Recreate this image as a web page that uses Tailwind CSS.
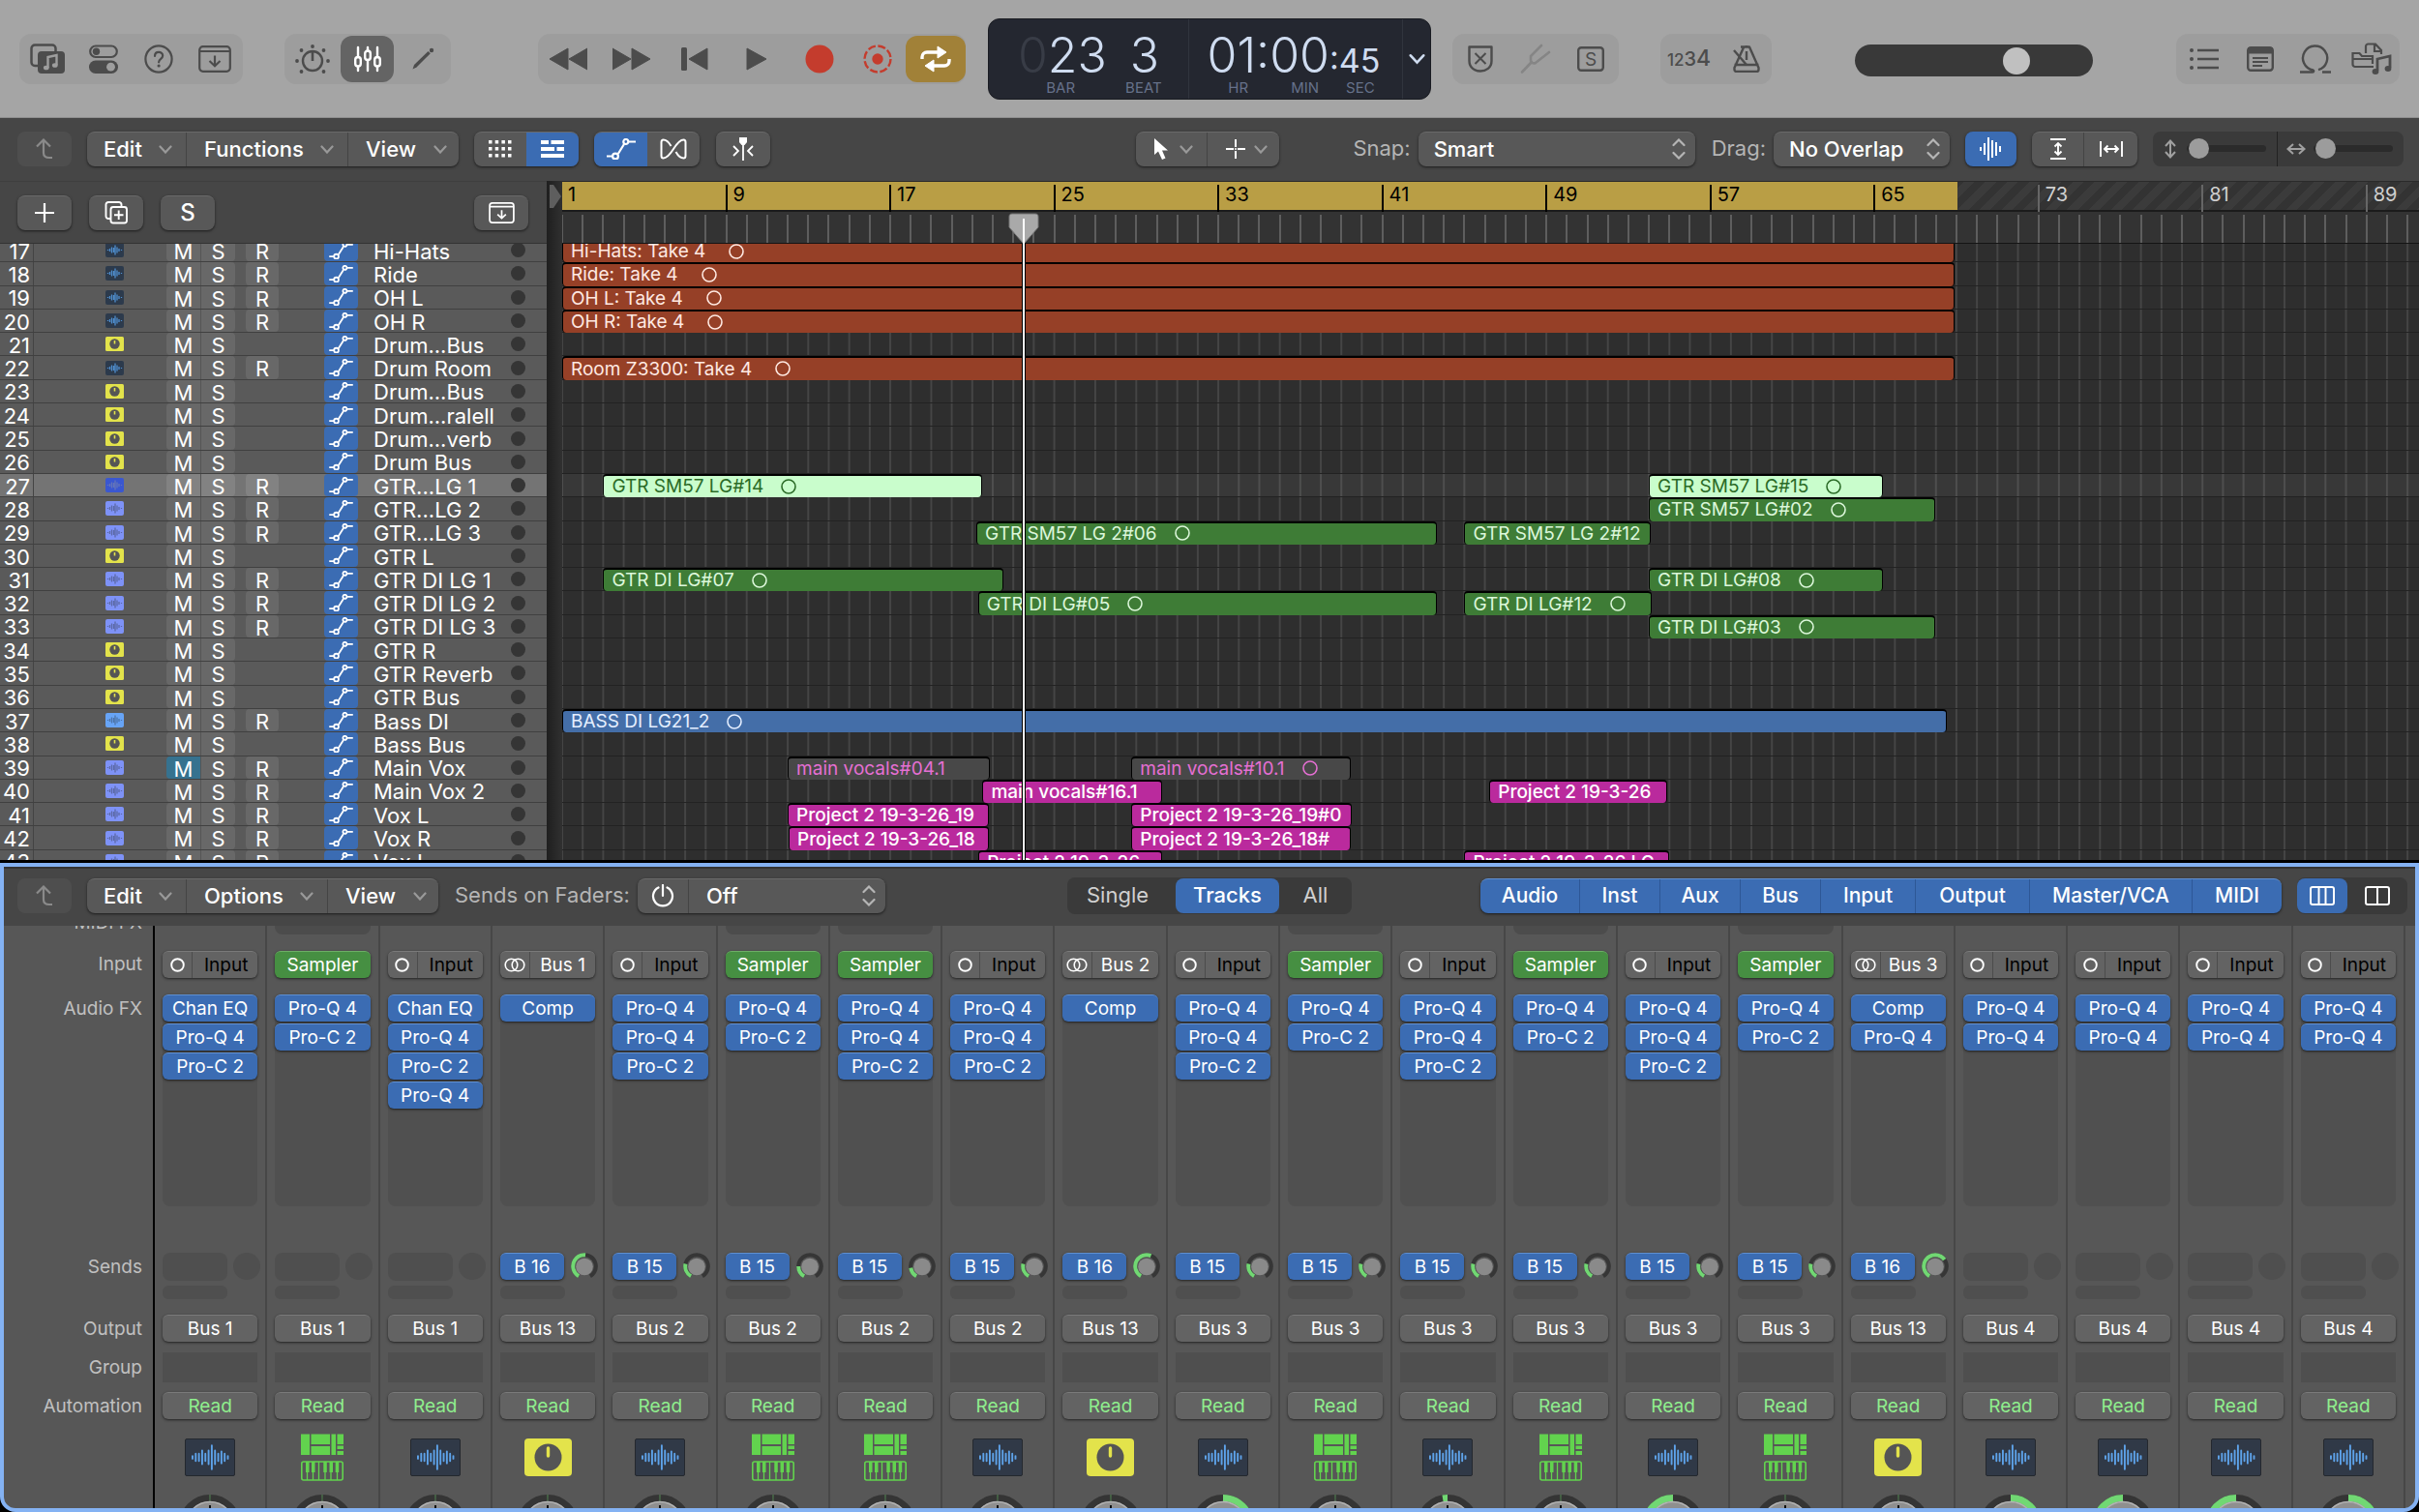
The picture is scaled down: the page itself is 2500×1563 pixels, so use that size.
<!DOCTYPE html>
<html lang="en">
<head>
  <meta charset="utf-8">
  <title>Project - Tracks</title>
  <meta name="viewport" content="width=device-width, initial-scale=1">
  <script src="https://cdn.jsdelivr.net/npm/@tailwindcss/browser@4"></script>
</head>
<body class="flex h-screen flex-col overflow-hidden bg-black font-['Inter','Liberation_Sans',sans-serif] text-[20px] text-white">

  <!-- icon sprite -->
  <svg class="hidden">
    <symbol id="i-library" viewBox="0 0 36 32"><path d="M8 23H5a3.500 3.500 0 0 1-3.500-3.500V5A3.500 3.500 0 0 1 5 1.500h18A3.500 3.500 0 0 1 26.500 5v3" fill="none" stroke="currentColor" stroke-width="2.500"/><rect x="8" y="8" width="28" height="23" rx="4" fill="currentColor"/><path d="M18.500 25V14l9-2v10" fill="none" stroke="#9e9e9e" stroke-width="2.400"/><ellipse cx="16.800" cy="25" rx="2.900" ry="2.300" fill="#9e9e9e"/><ellipse cx="25.800" cy="22.500" rx="2.900" ry="2.300" fill="#9e9e9e"/></symbol>
    <symbol id="i-toggles" viewBox="0 0 30 30"><rect x="1.200" y="1.500" width="27.600" height="11.500" rx="5.700" fill="none" stroke="currentColor" stroke-width="2.200"/><circle cx="7.500" cy="7.300" r="3.700" fill="currentColor"/><rect y="16.500" width="30" height="13.500" rx="6.700" fill="currentColor"/><circle cx="22.500" cy="23.200" r="4.400" fill="#9e9e9e"/></symbol>
    <symbol id="i-help" viewBox="0 0 30 30"><circle cx="15" cy="15" r="13.600" fill="none" stroke="currentColor" stroke-width="2.200"/><path d="M11 12c0-5.500 8.200-5.300 8.200-.4 0 3.200-4.100 3.300-4.100 6.700" fill="none" stroke="currentColor" stroke-width="2.200" stroke-linecap="round"/><circle cx="15.100" cy="22" r="1.600" fill="currentColor"/></symbol>
    <symbol id="i-inbox" viewBox="0 0 34 28"><rect x="1.200" y="1.200" width="31.600" height="25.600" rx="3.500" fill="none" stroke="currentColor" stroke-width="2.200"/><path d="M1 6h32M17 10.500V21m-5.500-5 5.500 5.200 5.500-5.200" fill="none" stroke="currentColor" stroke-width="2.200"/></symbol>
    <symbol id="i-dial" viewBox="0 0 36 30"><circle cx="18" cy="17" r="10" fill="none" stroke="currentColor" stroke-width="2.400"/><path d="M18 8v9" stroke="currentColor" stroke-width="2.600"/><g fill="currentColor"><circle cx="18" cy="2" r="1.900"/><circle cx="6.500" cy="6" r="1.900"/><circle cx="29.500" cy="6" r="1.900"/><circle cx="2" cy="17" r="1.900"/><circle cx="34" cy="17" r="1.900"/><circle cx="6.500" cy="28" r="1.900"/><circle cx="29.500" cy="28" r="1.900"/></g></symbol>
    <symbol id="i-faders" viewBox="0 0 28 28"><g fill="none" stroke="currentColor" stroke-width="2.400" stroke-linecap="round"><path d="M4 2v10M4 22v4M14 2v3M14 15v11M24 2v10M24 22v4"/><rect x="1.200" y="12" width="5.600" height="9.500" rx="2.800"/><rect x="11.200" y="5.500" width="5.600" height="9.500" rx="2.800"/><rect x="21.200" y="12" width="5.600" height="9.500" rx="2.800"/></g></symbol>
    <symbol id="i-pencil" viewBox="0 0 24 24"><path d="M1.500 22.500 3 18 17.500 4l2.300 2.200L5.500 20.500z" fill="currentColor"/><circle cx="21" cy="3" r="2.200" fill="currentColor"/></symbol>
    <symbol id="i-rewind" viewBox="0 0 40 24"><path d="M20 1v22L1 12zM40 1v22L21 12z" fill="currentColor" stroke="currentColor" stroke-linejoin="round"/></symbol>
    <symbol id="i-forward" viewBox="0 0 40 24"><path d="M0 1v22l19-11zM20 1v22l19-11z" fill="currentColor" stroke="currentColor" stroke-linejoin="round"/></symbol>
    <symbol id="i-start" viewBox="0 0 28 24"><rect width="6" height="24" rx="1.500" fill="currentColor"/><path d="M27 1v22L8 12z" fill="currentColor" stroke="currentColor" stroke-linejoin="round"/></symbol>
    <symbol id="i-play" viewBox="0 0 22 24"><path d="M1 1v22l20-11z" fill="currentColor" stroke="currentColor" stroke-linejoin="round"/></symbol>
    <symbol id="i-record" viewBox="0 0 30 30"><circle cx="15" cy="15" r="14.500" fill="#c43c2d"/></symbol>
    <symbol id="i-capture" viewBox="0 0 30 30"><circle cx="15" cy="15" r="13.500" fill="none" stroke="#c43c2d" stroke-width="2.400" stroke-dasharray="8 2.600"/><circle cx="15" cy="15" r="5.700" fill="#c43c2d"/></symbol>
    <symbol id="i-cycle" viewBox="0 0 32 28"><g fill="none" stroke="currentColor" stroke-width="3.400"><path d="M2 14v-2a5 5 0 0 1 5-5h14M30 14v2a5 5 0 0 1-5 5H11"/></g><path d="M18 1v12l9-6zM14 15v12l-9-6z" fill="currentColor" stroke="currentColor" stroke-linejoin="round"/></symbol>
    <symbol id="i-chev" viewBox="0 0 14 9"><path d="M1.500 1.500 7 7.500l5.500-6" fill="none" stroke="currentColor" stroke-width="2.200" stroke-linecap="round"/></symbol>
    <symbol id="i-updown" viewBox="0 0 14 22"><path d="M1.500 7 7 1.500 12.500 7M1.500 15 7 20.500 12.500 15" fill="none" stroke="currentColor" stroke-width="2.200" stroke-linecap="round"/></symbol>
    <symbol id="i-shield" viewBox="0 0 26 28"><path d="M1.500 1.500h23V16c0 14-23 14-23 0z" fill="none" stroke="currentColor" stroke-width="2.400" stroke-linejoin="round"/><path d="m7.500 8 11 11m0-11-11 11" stroke="currentColor" stroke-width="2"/></symbol>
    <symbol id="i-fork" viewBox="0 0 32 32"><path d="M22 2 11 13v5c0 2 3 3 5 2l14-11M12 19 2 29.500" fill="none" stroke="currentColor" stroke-width="2.600" stroke-linecap="round"/></symbol>
    <symbol id="i-solo" viewBox="0 0 28 26"><rect x="1.200" y="1.200" width="25.600" height="23.600" rx="3" fill="none" stroke="currentColor" stroke-width="2.400"/><text x="14" y="20" text-anchor="middle" font-size="19" fill="currentColor">S</text></symbol>
    <symbol id="i-metronome" viewBox="0 0 30 28"><path d="M9 1.500h6l3 0 9.500 21.500v2c0 1-1 2-2 2h-21c-1 0-2-1-2-2v-2L12 2c1-1 5-1 6 0M2.500 20h25" fill="none" stroke="currentColor" stroke-width="2.400" stroke-linejoin="round"/><path d="m2 5 13 15M15 6v9" stroke="currentColor" stroke-width="2.400"/></symbol>
    <symbol id="i-list" viewBox="0 0 30 22"><g fill="currentColor"><circle cx="2" cy="2" r="2"/><circle cx="2" cy="11" r="2"/><circle cx="2" cy="20" r="2"/></g><path d="M8 2h22M8 11h22M8 20h22" stroke="currentColor" stroke-width="2.400"/></symbol>
    <symbol id="i-note" viewBox="0 0 28 26"><rect x="1.200" y="1.200" width="25.600" height="23.600" rx="3" fill="none" stroke="currentColor" stroke-width="2.400"/><path d="M1 1h26v6.500H1z" fill="currentColor"/><path d="M6 12h16M6 16h16M6 20h10" stroke="currentColor" stroke-width="1.800"/></symbol>
    <symbol id="i-loop" viewBox="0 0 32 30"><path d="M0 28.500h13c1.500 0 1.500-1.500.5-2A12.600 12.600 0 1 1 19 26.200M23 28.500h9" fill="none" stroke="currentColor" stroke-width="2.400"/></symbol>
    <symbol id="i-media" viewBox="0 0 42 34"><path d="M15 11V4a2.500 2.500 0 0 1 2.500-2.500H25L31 8v4M24 2v7h7M23 25H4a2.500 2.500 0 0 1-2.500-2.500V11h7l2.500 3h11v8M2 17h21" fill="none" stroke="currentColor" stroke-width="2.200"/><path d="M27 29V17l13-3v12" fill="none" stroke="currentColor" stroke-width="2.800"/><ellipse cx="25" cy="30" rx="3.400" ry="3" fill="currentColor"/><ellipse cx="38" cy="27" rx="3.400" ry="3" fill="currentColor"/></symbol>
    <symbol id="i-up" viewBox="0 0 20 22"><path d="M2 8.500 9 1.500l7 7M9 2v13c0 3.500 2 5 6 5h3" fill="none" stroke="currentColor" stroke-width="2.200"/></symbol>
    <symbol id="i-grid" viewBox="0 0 24 18"><g fill="currentColor"><path id="gr" d="M0 0h3.500v3.500H0zM6.700 0h3.500v3.500H6.700zM13.400 0h3.500v3.500h-3.500zM20 0h3.500v3.500H20z"/><use href="#gr" y="7"/><use href="#gr" y="14"/></g></symbol>
    <symbol id="i-regions" viewBox="0 0 24 18"><path d="M0 0h8v4H0zM10.500 0H24v4H10.500zM0 7h14v4H0zM16.500 7H24v4h-7.500zM0 14h24v4H0z" fill="currentColor"/></symbol>
    <symbol id="i-auto" viewBox="0 0 30 22"><g fill="none" stroke="currentColor" stroke-width="2.200"><path d="M0 18.500h6M11.800 16 18 6M22.500 3.500H30"/><circle cx="9" cy="18.500" r="2.900"/><circle cx="19.800" cy="3.500" r="2.500"/></g></symbol>
    <symbol id="i-flex" viewBox="0 0 28 22"><path d="M11.500 8C9 3.500 6.500 1.500 3.500 1.500 2 1.500 1.500 2.500 1.500 4v14c0 1.500.5 2.500 2 2.500 4 0 7-4 10.500-9.500s6.500-9.500 10.500-9.500c1.500 0 2 1 2 2.500v14c0 1.500-.5 2.500-2 2.500-3 0-5.500-2-8-6.500" fill="none" stroke="currentColor" stroke-width="2"/></symbol>
    <symbol id="i-catch" viewBox="0 0 22 24"><path d="M7 0h8v5l-2.500 3h-3L7 5z" fill="currentColor"/><path d="M11 6v18M1 9l5 5-5 5M21 9l-5 5 5 5" fill="none" stroke="currentColor" stroke-width="1.800"/></symbol>
    <symbol id="i-arrow" viewBox="0 0 14 22"><path d="M0 0v17l4-3.500L8 22l3.500-1.500L8 12.500h6z" fill="currentColor"/></symbol>
    <symbol id="i-cross" viewBox="0 0 20 20"><path d="M10 0v8M10 12v8M0 10h8M12 10h8M10 9.200v1.600" stroke="currentColor" stroke-width="2"/></symbol>
    <symbol id="i-wavezoom" viewBox="0 0 24 24"><path d="M1 10v4M5 6v12M9 0v24M13 3v18M17 5v14M21 9v6" stroke="currentColor" stroke-width="2"/></symbol>
    <symbol id="i-vfit" viewBox="0 0 16 22"><path d="M0 1h16M0 21h16M8 5v12M4.500 8.500 8 5l3.500 3.500M4.500 13.500 8 17l3.500-3.500" fill="none" stroke="currentColor" stroke-width="1.900"/></symbol>
    <symbol id="i-hfit" viewBox="0 0 24 16"><path d="M1 0v16M23 0v16M5 8h14M8.500 4.500 5 8l3.500 3.500M15.500 4.500 19 8l-3.500 3.500" fill="none" stroke="currentColor" stroke-width="1.900"/></symbol>
    <symbol id="i-v" viewBox="0 0 14 20"><path d="M7 2v16M2 7l5-5.500L12 7M2 13l5 5.500 5-5.500" fill="none" stroke="currentColor" stroke-width="2"/></symbol>
    <symbol id="i-h" viewBox="0 0 20 14"><path d="M2 7h16M7 2 1.500 7 7 12M13 2l5.500 5-5.500 5" fill="none" stroke="currentColor" stroke-width="2"/></symbol>
    <symbol id="i-plus" viewBox="0 0 20 20"><path d="M10 0v20M0 10h20" stroke="currentColor" stroke-width="2.200"/></symbol>
    <symbol id="i-dup" viewBox="0 0 24 24"><path d="M7 18H4a2.500 2.500 0 0 1-2.500-2.500V3.500A2.500 2.500 0 0 1 4 1h11a2.500 2.500 0 0 1 2.500 2.500V6" fill="none" stroke="currentColor" stroke-width="1.900"/><rect x="6.500" y="6" width="16.500" height="16.500" rx="2.500" fill="none" stroke="currentColor" stroke-width="1.900"/><path d="M14.700 9.500v9.500M10 14.300h9.500" stroke="currentColor" stroke-width="1.900"/></symbol>
    <symbol id="i-power" viewBox="0 0 24 24"><path d="M12 1v11M7.500 3.500a10 10 0 1 0 9 0" fill="none" stroke="currentColor" stroke-width="2.200" stroke-linecap="round"/></symbol>
    <symbol id="i-cols3" viewBox="0 0 26 20"><path d="M9.500 1v18M16.500 1v18" stroke="currentColor" stroke-width="2"/><rect x="1" y="1" width="24" height="18" rx="2" fill="none" stroke="currentColor" stroke-width="2"/></symbol>
    <symbol id="i-cols2" viewBox="0 0 26 20"><path d="M13 1v18" stroke="currentColor" stroke-width="2"/><rect x="1" y="1" width="24" height="18" rx="2" fill="none" stroke="currentColor" stroke-width="2"/></symbol>
    <symbol id="i-wave" viewBox="0 0 52 39"><path d="M7 18v3M10.500 15.500v8M14 15.500v8M17.500 12v15M21 15.500v8M24.500 12v15M28 6.500v26M31.500 12v15M35 15.500v8M38.500 13v13M42 15.500v8M45.500 18v3" stroke="currentColor" stroke-width="2" stroke-linecap="round"/></symbol>
    <symbol id="i-aux" viewBox="0 0 49 39"><rect width="49" height="39" rx="4" fill="#e3e34b"/><circle cx="24.500" cy="19.500" r="14" fill="#555"/><path d="M24.500 10v8" stroke="#e3e34b" stroke-width="3.400" stroke-linecap="round"/></symbol>
    <symbol id="i-inst" viewBox="0 0 44 49"><path d="M0 .5h9v21.500H0zM10.500.5H30V11H10.500zM10.500 13H30v9H10.500zM31.500.5H36V22h-4.500zM37.500.5H44V11h-6.500zM37.500 12.500H44v3.500h-6.500zM37.500 18H44v4h-6.500z" fill="#62d34e"/><rect x=".8" y="29" width="42.400" height="19" rx="2" fill="none" stroke="#62d34e" stroke-width="1.600"/><path d="M6.500 29v19M12.500 29v19M18.500 29v19M25 29v19M31 29v19M37.500 29v19" stroke="#62d34e" stroke-width="1.300"/><path d="M5 29h3.500v11H5zM11 29h3.500v11H11zM23.300 29h3.500v11h-3.500zM29.500 29h3.500v11h-3.500zM35.700 29h3.500v11h-3.500z" fill="#62d34e"/></symbol>
  </svg>

  <!-- control bar -->
  <header class="flex h-[122px] shrink-0 items-center border-b border-[#8f8f8f] bg-[#a5a5a5] px-5 text-[#4c4c4c]">
    <div class="grid h-[52px] w-[231px] grid-cols-4 place-items-center rounded-xl bg-[#9d9d9d]">
      <button aria-label="Library"><svg class="h-8 w-9"><use href="#i-library"/></svg></button>
      <button aria-label="Inspector"><svg class="h-[30px] w-[30px]"><use href="#i-toggles"/></svg></button>
      <button aria-label="Quick Help"><svg class="h-[30px] w-[30px]"><use href="#i-help"/></svg></button>
      <button aria-label="Toolbar"><svg class="h-7 w-[34px]"><use href="#i-inbox"/></svg></button>
    </div>
    <div class="ml-[43px] grid h-[52px] w-[172px] grid-cols-3 place-items-center rounded-xl bg-[#9d9d9d]">
      <button aria-label="Smart Controls"><svg class="h-[30px] w-9"><use href="#i-dial"/></svg></button>
      <button aria-label="Mixer" class="grid h-12 w-[55px] place-items-center rounded-xl bg-[#646464] text-white"><svg class="h-7 w-7"><use href="#i-faders"/></svg></button>
      <button aria-label="Editors"><svg class="h-6 w-6"><use href="#i-pencil"/></svg></button>
    </div>
    <div class="ml-[90px] flex h-[52px] w-[442px] items-center rounded-xl bg-[#9d9d9d]">
      <div class="grid flex-1 grid-cols-[62px_70px_60px_68px_62px_58px] place-items-center">
        <button aria-label="Rewind"><svg class="h-6 w-10"><use href="#i-rewind"/></svg></button>
        <button aria-label="Forward"><svg class="h-6 w-10"><use href="#i-forward"/></svg></button>
        <button aria-label="Go to Beginning"><svg class="h-6 w-7"><use href="#i-start"/></svg></button>
        <button aria-label="Play"><svg class="h-6 w-[22px]"><use href="#i-play"/></svg></button>
        <button aria-label="Record"><svg class="h-[30px] w-[30px]"><use href="#i-record"/></svg></button>
        <button aria-label="Capture Recording"><svg class="h-[30px] w-[30px]"><use href="#i-capture"/></svg></button>
      </div>
      <button aria-label="Cycle" class="grid h-12 w-[62px] place-items-center rounded-xl bg-[#a18138] text-white"><svg class="h-7 w-8"><use href="#i-cycle"/></svg></button>
    </div>
    <div class="ml-[23px] flex h-[84px] w-[458px] rounded-xl border border-[#1a1c22] bg-[#242730] text-[#cfdcf0]">
      <div class="flex w-[207px] flex-col items-center border-r border-[#30343d]">
        <div class="flex h-[60px] gap-6 text-[50px] leading-[74px] font-light"><span><span class="text-[#383c46]">0</span>23</span><span>3</span></div>
        <div class="flex gap-[52px] pl-8 text-[15px] leading-[22px] text-[#66718a]"><span>BAR</span><span>BEAT</span></div>
      </div>
      <div class="flex flex-1 flex-col items-center border-r border-[#30343d] pr-1">
        <div class="flex h-[60px] items-baseline text-[50px] leading-[74px] font-light"><span>01:00</span><span class="text-[34px] font-normal">:45</span></div>
        <div class="flex gap-[44px] pl-4 text-[15px] leading-[22px] text-[#66718a]"><span>HR</span><span class="flex gap-7"><span>MIN</span><span>SEC</span></span></div>
      </div>
      <button aria-label="Display Mode" class="grid w-7 place-items-center"><svg class="h-3 w-[17px]"><use href="#i-chev"/></svg></button>
    </div>
    <div class="ml-[22px] grid h-[52px] w-[172px] grid-cols-3 place-items-center rounded-xl bg-[#9d9d9d]">
      <button aria-label="Replace"><svg class="h-7 w-[26px]"><use href="#i-shield"/></svg></button>
      <button aria-label="Tuner" class="text-[#858585]"><svg class="h-8 w-8"><use href="#i-fork"/></svg></button>
      <button aria-label="Solo"><svg class="h-[26px] w-7"><use href="#i-solo"/></svg></button>
    </div>
    <div class="ml-[43px] flex h-[52px] w-[115px] items-center justify-between rounded-xl bg-[#9d9d9d] px-[7px]">
      <button aria-label="Count In" class="flex items-baseline font-medium"><span class="text-[17px]">12</span><span class="text-[20px]">3</span><span class="text-[23px]">4</span></button>
      <button aria-label="Metronome" class="pr-1"><svg class="h-7 w-[30px]"><use href="#i-metronome"/></svg></button>
    </div>
    <input type="range" aria-label="Master Volume" min="0" max="100" value="70" class="mt-1 ml-auto h-[33px] w-[246px] appearance-none rounded-full bg-[#393939] [&::-webkit-slider-thumb]:h-[28px] [&::-webkit-slider-thumb]:w-[28px] [&::-webkit-slider-thumb]:appearance-none [&::-webkit-slider-thumb]:rounded-full [&::-webkit-slider-thumb]:bg-[#c0c0c0]">
    <div class="ml-[86px] grid h-[52px] w-[231px] grid-cols-4 place-items-center rounded-xl bg-[#9d9d9d]">
      <button aria-label="List Editors"><svg class="h-[22px] w-[30px]"><use href="#i-list"/></svg></button>
      <button aria-label="Note Pad"><svg class="h-[26px] w-7"><use href="#i-note"/></svg></button>
      <button aria-label="Loop Browser"><svg class="h-[30px] w-8"><use href="#i-loop"/></svg></button>
      <button aria-label="Browser"><svg class="h-[34px] w-[42px]"><use href="#i-media"/></svg></button>
    </div>
  </header>

  <!-- tracks area menu bar -->
  <nav class="flex h-[65px] shrink-0 items-center bg-[#464646] pr-4 pb-[2px] pl-[18px] text-[22px] font-medium">
    <button aria-label="Up" class="grid h-9 w-14 place-items-center rounded-lg bg-[#4e4e4e] text-[#8a8a8a]"><svg class="h-[22px] w-5"><use href="#i-up"/></svg></button>
    <div class="ml-4 flex h-9 divide-x divide-[#444] rounded-lg border-t border-[#6a6a6a] bg-[#585858] shadow-sm shadow-black/50">
      <button class="flex w-[103px] items-center justify-between pr-[14px] pl-[17px]">Edit<svg class="h-[9px] w-[14px] text-[#999]"><use href="#i-chev"/></svg></button>
      <button class="flex w-[167px] items-center justify-between pr-[14px] pl-[18px]">Functions<svg class="h-[9px] w-[14px] text-[#999]"><use href="#i-chev"/></svg></button>
      <button class="flex w-[114px] items-center justify-between pr-3 pl-[18px]">View<svg class="h-[9px] w-[14px] text-[#999]"><use href="#i-chev"/></svg></button>
    </div>
    <div class="ml-4 flex h-9 overflow-hidden rounded-lg border-t border-[#6a6a6a] bg-[#585858] shadow-sm shadow-black/50">
      <button aria-label="Live Loops" class="grid w-[54px] place-items-center"><svg class="h-[18px] w-6"><use href="#i-grid"/></svg></button>
      <button aria-label="Tracks View" class="grid w-[54px] place-items-center bg-[#3b6cb3]"><svg class="h-[18px] w-6"><use href="#i-regions"/></svg></button>
    </div>
    <div class="ml-4 flex h-9 overflow-hidden rounded-lg border-t border-[#6a6a6a] bg-[#585858] shadow-sm shadow-black/50">
      <button aria-label="Automation" class="grid w-[55px] place-items-center bg-[#3b6cb3]"><svg class="h-[22px] w-[30px]"><use href="#i-auto"/></svg></button>
      <button aria-label="Flex" class="grid w-[54px] place-items-center"><svg class="h-[22px] w-7"><use href="#i-flex"/></svg></button>
    </div>
    <button aria-label="Catch Playhead" class="ml-[17px] grid h-9 w-14 place-items-center rounded-lg border-t border-[#6a6a6a] bg-[#585858] shadow-sm shadow-black/50"><svg class="h-6 w-[22px]"><use href="#i-catch"/></svg></button>
    <div class="ml-auto flex h-9 divide-x divide-[#444] rounded-lg border-t border-[#6a6a6a] bg-[#585858] shadow-sm shadow-black/50">
      <button aria-label="Pointer Tool" class="flex w-[74px] items-center justify-between pr-[14px] pl-[19px]"><svg class="h-[22px] w-[14px]"><use href="#i-arrow"/></svg><svg class="h-[9px] w-[14px] text-[#999]"><use href="#i-chev"/></svg></button>
      <button aria-label="Marquee Tool" class="flex w-[74px] items-center justify-between pr-3 pl-[19px]"><svg class="h-5 w-5"><use href="#i-cross"/></svg><svg class="h-[9px] w-[14px] text-[#999]"><use href="#i-chev"/></svg></button>
    </div>
    <label for="snap" class="ml-[76px] font-normal text-[#b5b5b5]">Snap:</label>
    <div class="ml-2 grid h-9 w-[286px] items-center">
      <select id="snap" class="col-start-1 row-start-1 h-9 w-full appearance-none rounded-lg border-t border-[#6a6a6a] bg-[#585858] pl-4 shadow-sm shadow-black/50"><option>Smart</option><option>Bar</option><option>Beat</option></select>
      <svg class="pointer-events-none col-start-1 row-start-1 mr-[10px] h-[22px] w-[14px] justify-self-end text-[#b5b5b5]"><use href="#i-updown"/></svg>
    </div>
    <label for="drag" class="ml-[17px] font-normal text-[#b5b5b5]">Drag:</label>
    <div class="ml-2 grid h-9 w-[182px] items-center">
      <select id="drag" class="col-start-1 row-start-1 h-9 w-full appearance-none rounded-lg border-t border-[#6a6a6a] bg-[#585858] pl-4 shadow-sm shadow-black/50"><option>No Overlap</option><option>Overlap</option></select>
      <svg class="pointer-events-none col-start-1 row-start-1 mr-[10px] h-[22px] w-[14px] justify-self-end text-[#b5b5b5]"><use href="#i-updown"/></svg>
    </div>
    <button aria-label="Waveform Zoom" class="ml-4 grid h-9 w-[53px] place-items-center rounded-lg bg-[#3b6cb3] shadow-sm shadow-black/50"><svg class="h-6 w-6"><use href="#i-wavezoom"/></svg></button>
    <div class="ml-4 flex h-9 divide-x divide-[#444] rounded-lg border-t border-[#6a6a6a] bg-[#585858] shadow-sm shadow-black/50">
      <button aria-label="Vertical Auto Zoom" class="grid w-[54px] place-items-center"><svg class="h-[22px] w-4"><use href="#i-vfit"/></svg></button>
      <button aria-label="Zoom to Fit" class="grid w-[55px] place-items-center"><svg class="h-4 w-6"><use href="#i-hfit"/></svg></button>
    </div>
    <div class="ml-4 flex h-9 rounded-lg bg-[#3a3a3a] text-[#a0a0a0]">
      <label class="flex w-[129px] items-center gap-[10px] border-r border-[#222] pl-[11px]"><svg class="h-5 w-[14px] shrink-0"><use href="#i-v"/></svg><input type="range" value="4" aria-label="Vertical Zoom" class="h-[7px] w-[82px] appearance-none rounded-full bg-[#2b2b2b] [&::-webkit-slider-thumb]:h-[21px] [&::-webkit-slider-thumb]:w-[21px] [&::-webkit-slider-thumb]:appearance-none [&::-webkit-slider-thumb]:rounded-full [&::-webkit-slider-thumb]:bg-[#9c9c9c]"></label>
      <label class="flex w-[130px] items-center gap-[8px] pl-[9px]"><svg class="h-[14px] w-5 shrink-0"><use href="#i-h"/></svg><input type="range" value="4" aria-label="Horizontal Zoom" class="h-[7px] w-[82px] appearance-none rounded-full bg-[#2b2b2b] [&::-webkit-slider-thumb]:h-[21px] [&::-webkit-slider-thumb]:w-[21px] [&::-webkit-slider-thumb]:appearance-none [&::-webkit-slider-thumb]:rounded-full [&::-webkit-slider-thumb]:bg-[#9c9c9c]"></label>
    </div>
  </nav>

  <!-- tracks area -->
  <main class="flex min-h-0 flex-1 bg-[#2e2e2e]">
    <section class="flex w-[565px] shrink-0 flex-col">
      <div class="flex h-[65px] shrink-0 items-center gap-[18px] border-t border-b border-t-[#3e3e3e] border-b-[#333] bg-[#464646] pr-[19px] pl-[18px]">
        <button aria-label="Add Track" class="grid h-9 w-14 place-items-center rounded-lg border-t border-[#6a6a6a] bg-[#585858] shadow-sm shadow-black/50"><svg class="h-5 w-5"><use href="#i-plus"/></svg></button>
        <button aria-label="Duplicate Track" class="grid h-9 w-14 place-items-center rounded-lg border-t border-[#6a6a6a] bg-[#585858] shadow-sm shadow-black/50"><svg class="h-6 w-6"><use href="#i-dup"/></svg></button>
        <button class="h-9 w-14 rounded-lg border-t border-[#6a6a6a] bg-[#585858] text-[24px] leading-[34px] font-medium shadow-sm shadow-black/50">S</button>
        <button aria-label="Global Tracks" class="ml-auto grid h-9 w-14 place-items-center rounded-lg border-t border-[#6a6a6a] bg-[#585858] shadow-sm shadow-black/50"><svg class="h-[22px] w-[27px]"><use href="#i-inbox"/></svg></button>
      </div>
      <div class="min-h-0 flex-1 overflow-hidden">
        <ul id="tracks" class="-mt-[5px] grid h-[656px] grid-rows-[repeat(27,minmax(0,1fr))] text-[22px] leading-none"></ul>
      </div>
    </section>
    <div class="flex w-4 shrink-0 justify-end bg-linear-to-r from-[#1f1f1f] to-[#303030] pt-1"><svg class="h-6 w-[14px]" viewBox="0 0 14 24"><path d="M1 0h4l8 12-8 12H1z" fill="#5e5e5e"/></svg></div>
    <section class="relative flex min-w-0 flex-1 flex-col overflow-hidden">
      <div id="ruler" class="relative h-[65px] shrink-0 border-b border-black/60 bg-[#333]">
        <div class="h-8 border-t border-b-2 border-t-[#2a2a2a] border-b-[#1b1b1b] bg-[repeating-linear-gradient(135deg,#3b3b3b_0_8px,#333_8px_16px)]"><div id="cycle" class="h-full bg-[#b99e45]"></div></div>
      </div>
      <div class="relative min-h-0 flex-1 overflow-hidden">
        <svg id="bars" class="absolute h-full w-full" stroke="#454545" stroke-width="2"></svg>
        <div id="lanes" class="relative -mt-[5px] grid h-[656px] grid-rows-[repeat(27,minmax(0,1fr))]"></div>
      </div>
      <div id="playhead" class="absolute top-[33px] bottom-0 flex w-8 -translate-x-1/2 flex-col items-center">
        <svg class="h-8 w-8 shrink-0" viewBox="0 0 32 32"><path d="M1 4c0-2 1-3 3-3h24c2 0 3 1 3 3v11L17 31h-2L1 15z" fill="#a9a9a9" stroke="#777"/><path d="M16 6v26" stroke="#fff" stroke-width="2"/></svg>
        <div class="w-[4px] flex-1 border-x border-black bg-white"></div>
      </div>
    </section>
  </main>

  <!-- mixer -->
  <section class="mt-[3px] flex h-[671px] shrink-0 flex-col overflow-hidden rounded-b-2xl border-4 border-[#84b2f3] bg-[#575757]">
    <nav class="flex h-[61px] shrink-0 items-center border-t-2 border-[#333] bg-[#464646] pr-2 pb-1 pl-[14px] text-[22px] font-medium">
      <button aria-label="Up" class="grid h-9 w-14 place-items-center rounded-lg bg-[#4e4e4e] text-[#8a8a8a]"><svg class="h-[22px] w-5"><use href="#i-up"/></svg></button>
      <div class="ml-4 flex h-9 divide-x divide-[#444] rounded-lg border-t border-[#6a6a6a] bg-[#585858] shadow-sm shadow-black/50">
        <button class="flex w-[103px] items-center justify-between pr-[14px] pl-[17px]">Edit<svg class="h-[9px] w-[14px] text-[#999]"><use href="#i-chev"/></svg></button>
        <button class="flex w-[146px] items-center justify-between pr-[14px] pl-[18px]">Options<svg class="h-[9px] w-[14px] text-[#999]"><use href="#i-chev"/></svg></button>
        <button class="flex w-[114px] items-center justify-between pr-3 pl-[18px]">View<svg class="h-[9px] w-[14px] text-[#999]"><use href="#i-chev"/></svg></button>
      </div>
      <label for="sof" class="ml-[17px] font-normal text-[#b5b5b5]">Sends on Faders:</label>
      <div class="ml-2 flex h-9 rounded-lg border-t border-[#6a6a6a] bg-[#585858] shadow-sm shadow-black/50">
        <button aria-label="Sends on Faders Power" class="grid w-[53px] place-items-center border-r border-[#444]"><svg class="h-6 w-6"><use href="#i-power"/></svg></button>
        <div class="grid w-[203px] items-center">
          <select id="sof" class="col-start-1 row-start-1 h-full w-full appearance-none pl-[18px]"><option>Off</option><option>Bus 1</option></select>
          <svg class="pointer-events-none col-start-1 row-start-1 mr-[10px] h-[22px] w-[14px] justify-self-end text-[#b5b5b5]"><use href="#i-updown"/></svg>
        </div>
      </div>
      <div class="mr-[133px] ml-auto flex h-[38px] items-center rounded-lg bg-[#3a3a3a] font-normal text-[#d0d0d0]">
        <button class="w-[112px] pr-2">Single</button>
        <button class="h-9 w-[107px] rounded-lg bg-[#3b6cb3] font-medium text-white">Tracks</button>
        <button class="w-[75px]">All</button>
      </div>
      <div class="flex h-9 divide-x divide-[#2d5796] rounded-lg border-t border-[#6190d0] bg-[#3b6cb3] text-[21px] leading-[32px] font-medium shadow-sm shadow-black/50">
        <button class="w-[103px]">Audio</button><button class="w-[83px]">Inst</button><button class="w-[83px]">Aux</button><button class="w-[83px]">Bus</button><button class="w-[98px]">Input</button><button class="w-[118px]">Output</button><button class="w-[168px]">Master/VCA</button><button class="w-[92px]">MIDI</button>
      </div>
      <div class="ml-4 flex h-[38px] items-center rounded-lg bg-[#3a3a3a]">
        <button aria-label="Wide Strips" class="grid h-9 w-[52px] place-items-center rounded-lg bg-[#3b6cb3]"><svg class="h-5 w-[26px]"><use href="#i-cols3"/></svg></button>
        <button aria-label="Narrow Strips" class="grid w-[62px] place-items-center"><svg class="h-5 w-[26px]"><use href="#i-cols2"/></svg></button>
      </div>
    </nav>
    <div class="flex min-h-0 flex-1 overflow-hidden">
      <div class="flex w-[156px] shrink-0 flex-col items-end border-r-2 border-black pr-[11px] text-[19px] text-[#c0c0c0]">
        <div class="flex h-[9px] items-end pb-1 leading-[16px]">MIDI FX</div>
        <div class="mt-[17px] h-7 leading-7">Input</div>
        <div class="mt-[17px] h-[219px] leading-[30px]">Audio FX</div>
        <div class="mt-12 h-12 leading-[30px]">Sends</div>
        <div class="mt-4 h-7 leading-[30px]">Output</div>
        <div class="mt-3 h-[31px] leading-[30px]">Group</div>
        <div class="mt-[9px] h-7 leading-[30px]">Automation</div>
      </div>
      <div id="strips" class="mr-[10px] grid min-w-0 flex-1 grid-cols-20 text-[19px] leading-none"></div>
    </div>
  </section>

  <script>
    // visible bars in the timeline
    var FIRST = 1, SPAN = 90.56;
    var pct = function(bar) { return ((bar - FIRST) / SPAN * 100) + '%'; };

    // num, name, icon, has record button
    var tracks = [
      [17, 'Hi-Hats', 'audio', 1], [18, 'Ride', 'audio', 1], [19, 'OH L', 'audio', 1], [20, 'OH R', 'audio', 1],
      [21, 'Drum...Bus', 'aux', 0], [22, 'Drum Room', 'audio', 1], [23, 'Drum...Bus', 'aux', 0], [24, 'Drum...ralell', 'aux', 0],
      [25, 'Drum...verb', 'aux', 0], [26, 'Drum Bus', 'aux', 0], [27, 'GTR...LG 1', 'deep', 1], [28, 'GTR...LG 2', 'violet', 1],
      [29, 'GTR...LG 3', 'violet', 1], [30, 'GTR L', 'aux', 0], [31, 'GTR DI LG 1', 'violet', 1], [32, 'GTR DI LG 2', 'violet', 1],
      [33, 'GTR DI LG 3', 'violet', 1], [34, 'GTR R', 'aux', 0], [35, 'GTR Reverb', 'aux', 0], [36, 'GTR Bus', 'aux', 0],
      [37, 'Bass DI', 'sky', 1], [38, 'Bass Bus', 'aux', 0], [39, 'Main Vox', 'violet', 1], [40, 'Main Vox 2', 'violet', 1],
      [41, 'Vox L', 'violet', 1], [42, 'Vox R', 'violet', 1], [43, 'Vox L', 'violet', 1]
    ];

    // track: [start bar, end bar, label, colour, loop circle]
    var clips = {
      17: [[1, 68.9, 'Hi-Hats: Take 4', 'rust', 1]],
      18: [[1, 68.9, 'Ride: Take 4', 'rust', 1]],
      19: [[1, 68.9, 'OH L: Take 4', 'rust', 1]],
      20: [[1, 68.9, 'OH R: Take 4', 'rust', 1]],
      22: [[1, 68.9, 'Room Z3300: Take 4', 'rust', 1]],
      27: [[3, 21.5, 'GTR SM57 LG#14', 'mint', 1], [54, 65.4, 'GTR SM57 LG#15', 'mint', 1]],
      28: [[54, 67.95, 'GTR SM57 LG#02', 'green', 1]],
      29: [[21.2, 43.66, 'GTR SM57 LG 2#06', 'green', 1], [45, 54.1, 'GTR SM57 LG 2#12', 'green', 0]],
      31: [[3, 22.52, 'GTR DI LG#07', 'green', 1], [54, 65.4, 'GTR DI LG#08', 'green', 1]],
      32: [[21.28, 43.66, 'GTR DI LG#05', 'green', 1], [45, 54.16, 'GTR DI LG#12', 'green', 1]],
      33: [[54, 67.95, 'GTR DI LG#03', 'green', 1]],
      37: [[1, 68.52, 'BASS DI LG21_2', 'blue', 1]],
      39: [[12, 21.87, 'main vocals#04.1', 'muted', 0], [28.76, 39.44, 'main vocals#10.1', 'muted', 1]],
      40: [[21.5, 30.25, 'main vocals#16.1', 'pink', 0], [46.22, 54.9, 'Project 2 19-3-26', 'pink', 0]],
      41: [[12, 21.8, 'Project 2 19-3-26_19', 'pink', 0], [28.76, 39.5, 'Project 2 19-3-26_19#0', 'pink', 0]],
      42: [[12.04, 21.8, 'Project 2 19-3-26_18', 'pink', 0], [28.76, 39.44, 'Project 2 19-3-26_18#', 'pink', 0]],
      43: [[21.3, 30.25, 'Project 2 19-3-26', 'pink', 0], [45, 55, 'Project 2 19-3-26 LG', 'pink', 0]]
    };
    var clipColors = {
      rust: 'bg-[#964027] text-[#ffe9e2] gap-6',
      mint: 'bg-[#c9fdcc] text-[#2b6b27] gap-[18px]',
      green: 'bg-[#3e7c36] text-[#dcf7da] gap-[18px]',
      blue: 'bg-[#446ea8] text-[#e4eeff] gap-[18px]',
      muted: 'bg-[#484848] text-[#e56fd3] gap-[18px]',
      pink: 'bg-[#ba2a9d] text-white font-medium'
    };
    var iconColors = {
      audio: 'bg-[#2c3a4c] text-[#4f8fd0]',
      deep: 'bg-[#3a57d0] text-[#6576b8]',
      violet: 'bg-[#7e92f7] text-[#5b69a6]',
      sky: 'bg-[#67a4f6] text-[#4d74a8]'
    };

    document.getElementById('tracks').innerHTML = tracks.map(function(t) {
      var on = t[0] === 27;
      var btn = on ? 'bg-[#828282]' : 'bg-[#686868]';
      var icon = t[2] === 'aux'
        ? '<svg class="h-[15px] w-[19px]" viewBox="0 0 19 15"><rect width="19" height="15" rx="1.500" fill="#e3e34b"/><circle cx="9.500" cy="7.500" r="5.200" fill="#555"/><path d="M9.500 4v3.500" stroke="#e3e34b" stroke-width="1.600"/></svg>'
        : '<svg class="h-[15px] w-[19px] rounded-xs ' + iconColors[t[2]] + '" viewBox="0 0 19 15"><path d="M2.500 7v1M4.500 6v3M6.500 4.500v6M8.500 5v5M10 2.500v10M12 4.500v6M14 6v3M16.500 7v1" stroke="currentColor" stroke-width="1.300"/></svg>';
      return '<li class="flex min-h-0 items-stretch border-b border-[#404040] ' + (on ? 'bg-[#747474]' : 'bg-[#5a5a5a]') + '">' +
        '<span class="flex w-[35px] items-center justify-end border-r border-[#444] pt-[2px] pr-[3px]">' + t[0] + '</span>' +
        '<span class="flex w-[137px] items-center pl-[74px]">' + icon + '</span>' +
        '<button aria-label="Mute" class="w-9 rounded-l border-r border-[#555] pt-[2px] ' + (t[0] === 39 ? 'bg-[#36728f]' : btn) + '">M</button>' +
        '<button aria-label="Solo" class="w-[35px] rounded-r pt-[2px] ' + btn + '">S</button>' +
        (t[3] ? '<button aria-label="Record Enable" class="ml-[11px] w-[34px] rounded pt-[2px] ' + btn + '">R</button>' : '<span class="ml-[11px] w-[34px]"></span>') +
        '<button aria-label="Automation" class="ml-[47px] grid w-[35px] place-items-center rounded bg-[#3b6cb3]"><svg class="h-[18px] w-[25px]"><use href="#i-auto"/></svg></button>' +
        '<span class="ml-4 flex w-[142px] items-center pt-[2px] whitespace-nowrap">' + t[1] + '</span>' +
        '<span class="h-[15px] w-[15px] self-center rounded-full bg-[#353535]"></span></li>';
    }).join('');

    document.getElementById('lanes').innerHTML = tracks.map(function(t) {
      return '<div class="relative min-h-0 border-b border-[#222] ' + (t[0] === 27 ? 'bg-white/5' : '') + '">' +
        (clips[t[0]] || []).map(function(c) {
          return '<div class="absolute top-0 -bottom-px flex items-center overflow-hidden rounded-[4px] border-x border-t-2 border-black pb-px pl-2 text-[19px] leading-none whitespace-nowrap ' + clipColors[c[3]] + '" style="left:' + pct(c[0]) + ';width:' + ((c[1] - c[0]) / SPAN * 100) + '%">' +
            '<span>' + c[2] + '</span>' + (c[4] ? '<svg class="h-4 w-4 shrink-0" viewBox="0 0 16 16"><circle cx="8" cy="8" r="7" fill="none" stroke="currentColor" stroke-width="1.600"/></svg>' : '') + '</div>';
        }).join('') + '</div>';
    }).join('');

    // bar lines and ruler ticks
    var lines = '', ruler = '';
    for (var b = 1; b < FIRST + SPAN; b++) {
      lines += '<line x1="' + pct(b) + '" x2="' + pct(b) + '" y1="0" y2="100%"/>';
      ruler += '<span class="absolute top-[35px] bottom-0 w-[2px] -translate-x-px bg-[#5e5e5e]" style="left:' + pct(b) + '"></span>';
      if ((b - 1) % 8 === 0) {
        var dark = b < 69;
        ruler += '<span class="absolute top-1 h-7 pl-[6px] text-[20px] leading-[21px] ' + (b > 1 ? 'border-l-2 -translate-x-px ' : '') + (dark ? 'border-black text-black' : 'border-[#666] text-[#d0d0d0]') + '" style="left:' + pct(b) + '">' + b + '</span>';
      }
    }
    document.getElementById('bars').innerHTML = lines;
    document.getElementById('ruler').insertAdjacentHTML('beforeend', ruler);
    document.getElementById('cycle').style.width = pct(69.05);
    document.getElementById('playhead').style.left = pct(23.52);

    // type, input, inserts, send, send level (degrees), output, pan (degrees)
    var Q = 'Pro-Q 4', C = 'Pro-C 2';
    var strips = [
      ['audio', 'Input', ['Chan EQ', Q, C], '', 0, 'Bus 1', 0],
      ['inst', 'Sampler', [Q, C], '', 0, 'Bus 1', 0],
      ['audio', 'Input', ['Chan EQ', Q, C, Q], '', 0, 'Bus 1', 0],
      ['aux', 'Bus 1', ['Comp'], 'B 16', 155, 'Bus 13', 0],
      ['audio', 'Input', [Q, Q, C], 'B 15', 72, 'Bus 2', 0],
      ['inst', 'Sampler', [Q, C], 'B 15', 60, 'Bus 2', 0],
      ['inst', 'Sampler', [Q, Q, C], 'B 15', 52, 'Bus 2', 0],
      ['audio', 'Input', [Q, Q, C], 'B 15', 72, 'Bus 2', 0],
      ['aux', 'Bus 2', ['Comp'], 'B 16', 172, 'Bus 13', 0],
      ['audio', 'Input', [Q, Q, C], 'B 15', 72, 'Bus 3', 90],
      ['inst', 'Sampler', [Q, C], 'B 15', 72, 'Bus 3', 0],
      ['audio', 'Input', [Q, Q, C], 'B 15', 72, 'Bus 3', -10],
      ['inst', 'Sampler', [Q, C], 'B 15', 72, 'Bus 3', 0],
      ['audio', 'Input', [Q, Q, C], 'B 15', 72, 'Bus 3', -90],
      ['inst', 'Sampler', [Q, C], 'B 15', 72, 'Bus 3', 0],
      ['aux', 'Bus 3', ['Comp', Q], 'B 16', 205, 'Bus 13', 0],
      ['audio', 'Input', [Q, Q], '', 0, 'Bus 4', 90],
      ['audio', 'Input', [Q, Q], '', 0, 'Bus 4', -90],
      ['audio', 'Input', [Q, Q], '', 0, 'Bus 4', -90],
      ['audio', 'Input', [Q, Q], '', 0, 'Bus 4', 90]
    ];

    var gray = 'border-t border-[#7a7a7a] bg-[#636363] shadow-sm shadow-black/50';
    document.getElementById('strips').innerHTML = strips.map(function(s) {
      var input;
      if (s[0] === 'inst') {
        input = '<button class="h-7 w-full rounded-md border-t border-[#6cae66] bg-[#468f42] shadow-sm shadow-black/50">' + s[1] + '</button>';
      } else {
        var circles = s[0] === 'aux'
          ? '<svg class="h-[15px] w-[22px]" viewBox="0 0 22 15"><g fill="none" stroke="#fff" stroke-width="1.600"><circle cx="7.500" cy="7.500" r="6.300"/><circle cx="14.500" cy="7.500" r="6.300"/></g></svg>'
          : '<svg class="h-[15px] w-[15px]" viewBox="0 0 15 15"><circle cx="7.500" cy="7.500" r="6.300" fill="none" stroke="#fff" stroke-width="1.900"/></svg>';
        input = '<div class="flex h-7 rounded-md ' + gray + '"><button aria-label="Format" class="grid w-[31px] place-items-center border-r border-[#4c4c4c]">' + circles + '</button>' +
          '<button class="flex-1 ' + (s[0] === 'aux' ? '' : 'pl-[2px] text-black') + '">' + s[1] + '</button></div>';
      }
      var sends = s[3]
        ? '<button class="h-7 w-[66px] shrink-0 rounded-md border-t border-[#5f8fd0] bg-[#3b6cb3] shadow-sm shadow-black/50">' + s[3] + '</button>' +
          '<svg class="ml-[7px] h-7 w-7 shrink-0" viewBox="0 0 28 28"><g fill="none" stroke-width="4" transform="rotate(120 14 14)"><circle cx="14" cy="14" r="11.800" stroke="#363636" pathLength="360" stroke-dasharray="300 360"/><circle cx="14" cy="14" r="11.800" stroke="#71d873" pathLength="360" stroke-dasharray="' + s[4] + ' 360"/></g><circle cx="14" cy="14.500" r="8.800" fill="#8a8a8a"/></svg>'
        : '<div class="h-[29px] w-[67px] shrink-0 rounded-lg bg-[#4f4f4f]"></div><div class="ml-[6px] h-7 w-7 shrink-0 rounded-full bg-[#4f4f4f]"></div>';
      var icon = s[0] === 'inst' ? '<svg class="h-[49px] w-[44px]"><use href="#i-inst"/></svg>'
        : s[0] === 'aux' ? '<svg class="h-[39px] w-[49px]"><use href="#i-aux"/></svg>'
        : '<svg class="h-[39px] w-[52px] rounded-xs border border-[#24282e] bg-[#303947] text-[#5ea3ea]"><use href="#i-wave"/></svg>';
      // pan ring starts at 12 o'clock and is drawn towards the pan side
      var span = Math.abs(s[6]) || 1;
      var rot = s[6] < 0 ? -90 + s[6] : s[6] > 0 ? -90 : -90.5;
      var pan = '<svg class="h-16 w-16 shrink-0" viewBox="0 0 64 64"><circle cx="32" cy="32" r="28.500" fill="none" stroke="#353535" stroke-width="7"/><circle cx="32" cy="32" r="28.500" fill="none" stroke="#71d873" stroke-width="7" pathLength="360" stroke-dasharray="' + span + ' 360" transform="rotate(' + rot + ' 32 32)"/><circle cx="32" cy="32" r="24.500" fill="#8f8f8f" stroke="#b4b4b4" stroke-width="1.500"/>' + (s[6] === 0 || s[6] === -10 ? '<path d="M32 11v10" stroke="#111" stroke-width="2"/>' : '') + '</svg>';
      return '<div class="flex min-w-0 flex-col border-r-2 border-[#474747] px-2">' +
        '<div class="h-[9px] shrink-0 rounded-b-lg ' + (s[0] === 'inst' ? 'bg-[#4c4c4c]' : '') + '"></div>' +
        '<div class="mt-[17px] shrink-0">' + input + '</div>' +
        '<div class="mt-[17px] flex h-[219px] shrink-0 flex-col gap-[2px] rounded-lg bg-[#505050]">' + s[2].map(function(f) {
          return '<button class="h-7 rounded-md border-t border-[#5f8fd0] bg-[#3b6cb3] whitespace-nowrap shadow-sm shadow-black/50">' + f + '</button>';
        }).join('') + '</div>' +
        '<div class="mt-12 flex h-[29px] shrink-0">' + sends + '</div>' +
        '<div class="mt-[5px] h-[14px] w-[67px] shrink-0 rounded-md bg-[#4f4f4f]"></div>' +
        '<button class="mt-4 h-7 shrink-0 rounded-md ' + gray + '">' + s[5] + '</button>' +
        '<div class="mt-[11px] h-[31px] shrink-0 bg-[#4f4f4f]"></div>' +
        '<button class="mt-[10px] h-7 shrink-0 rounded-md text-[#8fee8d] ' + gray + '">Read</button>' +
        '<div class="mt-[10px] flex h-[58px] shrink-0 items-center justify-center">' + icon + '</div>' +
        '<div class="mt-[10px] flex justify-center">' + pan + '</div></div>';
    }).join('');
  </script>
</body>
</html>
